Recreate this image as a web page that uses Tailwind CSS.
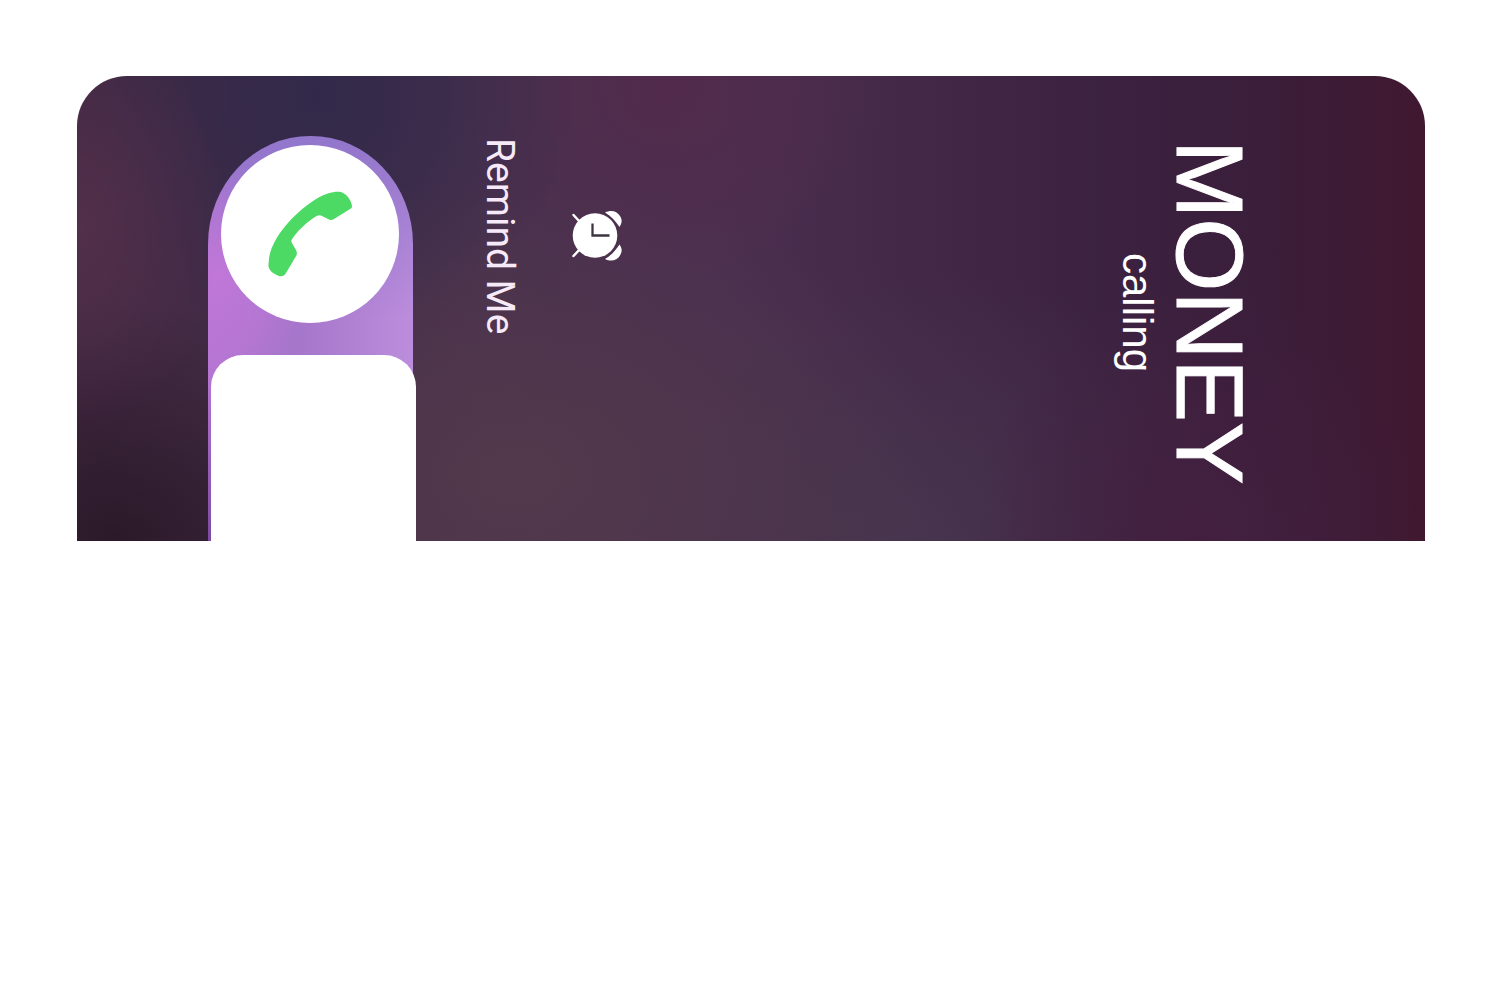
<!DOCTYPE html>
<html lang="en">
<head>
    <meta charset="UTF-8">
    <meta name="viewport" content="width=device-width, initial-scale=1.0">
    <title>Incoming call</title>
    <script src="https://cdn.jsdelivr.net/npm/@tailwindcss/browser@4"></script>
</head>
<body class="min-h-screen bg-white font-['Liberation_Sans',sans-serif]">
    <main class="pt-[76px] pl-[77px] pr-[75px]">
        <section class="flex items-start h-[465px] overflow-hidden rounded-t-[50px] text-white bg-[radial-gradient(ellipse_150px_200px_at_0px_150px,#522f4b,#522f4b00),radial-gradient(ellipse_300px_240px_at_40px_465px,#2b1929,#2b192900),radial-gradient(ellipse_260px_240px_at_240px_20px,#32294a,#32294a00),radial-gradient(ellipse_220px_200px_at_590px_10px,#522b4c,#522b4c00),radial-gradient(ellipse_220px_260px_at_1120px_465px,#431f3f,#431f3f00),radial-gradient(ellipse_420px_300px_at_440px_400px,#52394b,#52394b00),radial-gradient(ellipse_400px_280px_at_800px_465px,#47354e,#47354e00),linear-gradient(to_right,#432943_0%,#3f2b47_16%,#49314e_30%,#4b2f50_48%,#432848_62%,#3c2241_76%,#3a1e3a_88%,#401830_100%)]">
            <!-- Slide to answer -->
            <div class="flex flex-col items-start mt-[60px] ml-[131px] w-[205px] h-[405px] shrink-0 pt-[9px] [border-radius:102px_102px_0_0/108px_108px_0_0] bg-[radial-gradient(ellipse_90px_110px_at_10px_140px,#c077d8,#c077d800),linear-gradient(to_bottom,#9277cc_0%,#9277cc00_45%),linear-gradient(to_bottom,#7d4ba200_60%,#7d4ba2_100%),linear-gradient(to_right,#b575d2,#a576ca_45%,#bd8ddd)]">
                <button type="button" aria-label="Answer call" class="flex items-center justify-center size-[178px] ml-[13px] shrink-0 rounded-full bg-white">
                    <svg class="size-[88px]" viewBox="266 190 88 88" fill="#4cd964" aria-hidden="true">
                        <path d="M269 259 C271 240 291 215 316 199 C326 193 335 191 341 192 C347 194 351 200 352 206 C352 207 352 208 350 209 L334 219 Q331 221 328 219 L321 215.500 Q318 214.500 315 217 C306 223 297 231 291.500 240 Q291 242 292.500 244 L296 250 Q298 254 295.500 257 L286 273 Q283.500 277 279 276 C272 273 268 270 268.500 264 Z"/>
                    </svg>
                </button>
                <div class="mt-8 ml-[3px] w-[205px] grow shrink-0 rounded-t-[32px] bg-white"></div>
            </div>

            <!-- Remind Me -->
            <button type="button" class="flex items-center gap-[51px] mt-[62px] ml-[67px] shrink-0 text-[39px] leading-10 text-[#f7eaf8] font-[Roboto,sans-serif]">
                <span class="[writing-mode:vertical-rl]">Remind Me</span>
                <svg class="w-[52px] h-[54px]" viewBox="571 209 52 54" aria-hidden="true">
                    <g stroke="#fff" stroke-width="2.500" stroke-linecap="round">
                        <path d="M573.500 215 L580 222"/>
                        <path d="M573.500 256 L580 249"/>
                    </g>
                    <path fill="#fff" d="M605 212.500 C611 209.500 617 211 620 216 C622.500 220 622 223 619.500 227 C616 221.500 611 216 605 212.500Z"/>
                    <path fill="#fff" d="M605 259 C611 262 617 260.500 620 255.500 C622.500 251.500 622 248 619.500 244.500 C616 250 611 255.500 605 259Z"/>
                    <circle cx="595" cy="235.500" r="22.300" fill="#fff"/>
                    <path fill="none" stroke="#3c3440" stroke-width="2.300" d="M592.500 223.500 V235.500 H609.500"/>
                </svg>
            </button>

            <!-- Caller -->
            <div class="flex items-center mt-16 ml-auto mr-[169px] shrink-0">
                <p class="text-[42px] leading-[50px] [writing-mode:vertical-rl]">calling</p>
                <h1 class="text-[94px] leading-[94px] [-webkit-text-stroke:1px_white] [writing-mode:vertical-rl]">MONEY</h1>
            </div>
        </section>
    </main>
</body>
</html>
